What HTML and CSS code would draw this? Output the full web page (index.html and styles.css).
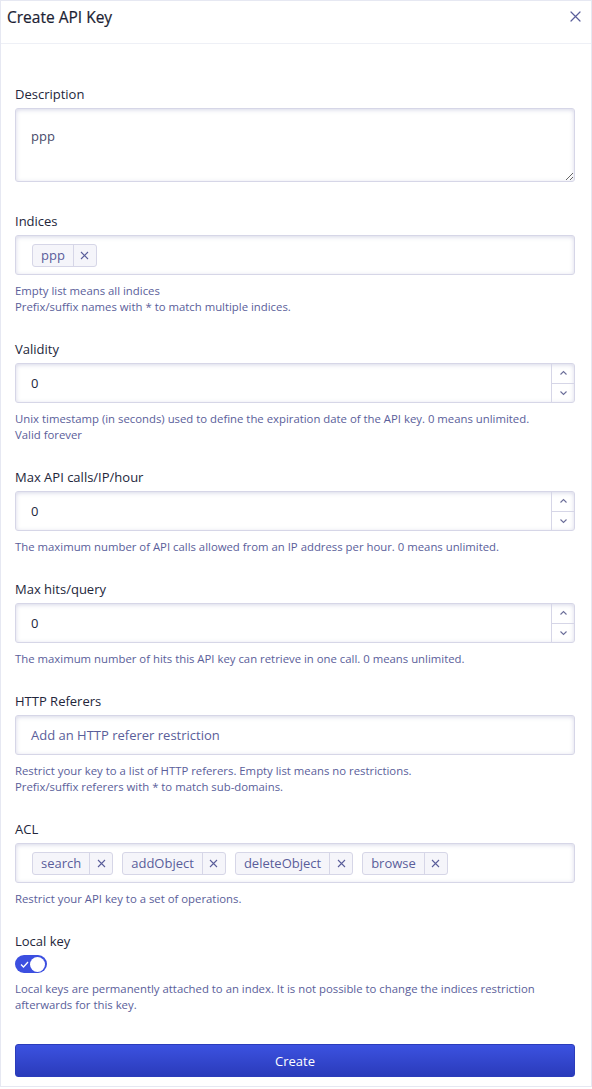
FILE: index.html
```html
<!DOCTYPE html>
<html lang="en">
<head>
<meta charset="utf-8">
<title>Create API Key</title>
<link rel="stylesheet" href="styles.css">
</head>
<body>
<div class="modal">
  <header class="modal-header">
    <h1 class="modal-title">Create API Key</h1>
    <button class="close" aria-label="Close">
      <svg width="11" height="11" viewBox="0 0 11 11"><path d="M1 1L10 10M10 1L1 10" stroke="#5a5e9a" stroke-width="1.2" fill="none" stroke-linecap="round"/></svg>
    </button>
  </header>
  <div class="modal-body">
    <div class="field field-textarea">
      <label class="label">Description</label>
      <textarea class="textarea">ppp</textarea>
    </div>

    <div class="field">
      <label class="label">Indices</label>
      <div class="input tags-input">
        <span class="tag"><span class="tag-text">ppp</span><span class="tag-del"><svg width="9" height="9" viewBox="0 0 9 9"><path d="M1 1L8 8M8 1L1 8" stroke="#5a5e9a" stroke-width="1.1" fill="none"/></svg></span></span>
      </div>
      <p class="help">Empty list means all indices<br>Prefix/suffix names with * to match multiple indices.</p>
    </div>

    <div class="field">
      <label class="label">Validity</label>
      <div class="input number-input">
        <span class="value">0</span>
        <div class="spinner">
          <span class="spin"><svg width="9" height="6" viewBox="0 0 9 6"><path d="M1.5 4.5L4.5 1.5L7.5 4.5" stroke="#6b6e99" stroke-width="1.1" fill="none"/></svg></span>
          <span class="spin"><svg width="9" height="6" viewBox="0 0 9 6"><path d="M1.5 1.5L4.5 4.5L7.5 1.5" stroke="#6b6e99" stroke-width="1.1" fill="none"/></svg></span>
        </div>
      </div>
      <p class="help">Unix timestamp (in seconds) used to define the expiration date of the API key. 0 means unlimited.<br>Valid forever</p>
    </div>

    <div class="field">
      <label class="label">Max API calls/IP/hour</label>
      <div class="input number-input">
        <span class="value">0</span>
        <div class="spinner">
          <span class="spin"><svg width="9" height="6" viewBox="0 0 9 6"><path d="M1.5 4.5L4.5 1.5L7.5 4.5" stroke="#6b6e99" stroke-width="1.1" fill="none"/></svg></span>
          <span class="spin"><svg width="9" height="6" viewBox="0 0 9 6"><path d="M1.5 1.5L4.5 4.5L7.5 1.5" stroke="#6b6e99" stroke-width="1.1" fill="none"/></svg></span>
        </div>
      </div>
      <p class="help">The maximum number of API calls allowed from an IP address per hour. 0 means unlimited.</p>
    </div>

    <div class="field">
      <label class="label">Max hits/query</label>
      <div class="input number-input">
        <span class="value">0</span>
        <div class="spinner">
          <span class="spin"><svg width="9" height="6" viewBox="0 0 9 6"><path d="M1.5 4.5L4.5 1.5L7.5 4.5" stroke="#6b6e99" stroke-width="1.1" fill="none"/></svg></span>
          <span class="spin"><svg width="9" height="6" viewBox="0 0 9 6"><path d="M1.5 1.5L4.5 4.5L7.5 1.5" stroke="#6b6e99" stroke-width="1.1" fill="none"/></svg></span>
        </div>
      </div>
      <p class="help">The maximum number of hits this API key can retrieve in one call. 0 means unlimited.</p>
    </div>

    <div class="field">
      <label class="label">HTTP Referers</label>
      <div class="input text-input">
        <span class="placeholder">Add an HTTP referer restriction</span>
      </div>
      <p class="help">Restrict your key to a list of HTTP referers. Empty list means no restrictions.<br>Prefix/suffix referers with * to match sub-domains.</p>
    </div>

    <div class="field">
      <label class="label">ACL</label>
      <div class="input tags-input">
        <span class="tag"><span class="tag-text">search</span><span class="tag-del"><svg width="9" height="9" viewBox="0 0 9 9"><path d="M1 1L8 8M8 1L1 8" stroke="#5a5e9a" stroke-width="1.1" fill="none"/></svg></span></span>
        <span class="tag"><span class="tag-text">addObject</span><span class="tag-del"><svg width="9" height="9" viewBox="0 0 9 9"><path d="M1 1L8 8M8 1L1 8" stroke="#5a5e9a" stroke-width="1.1" fill="none"/></svg></span></span>
        <span class="tag"><span class="tag-text">deleteObject</span><span class="tag-del"><svg width="9" height="9" viewBox="0 0 9 9"><path d="M1 1L8 8M8 1L1 8" stroke="#5a5e9a" stroke-width="1.1" fill="none"/></svg></span></span>
        <span class="tag"><span class="tag-text">browse</span><span class="tag-del"><svg width="9" height="9" viewBox="0 0 9 9"><path d="M1 1L8 8M8 1L1 8" stroke="#5a5e9a" stroke-width="1.1" fill="none"/></svg></span></span>
      </div>
      <p class="help">Restrict your API key to a set of operations.</p>
    </div>

    <div class="field">
      <label class="label">Local key</label>
      <div class="toggle">
        <svg class="check" width="9" height="7" viewBox="0 0 9 7"><path d="M1 3.5L3.5 6L8 1" stroke="#fff" stroke-width="1.3" fill="none"/></svg>
        <span class="knob"></span>
      </div>
      <p class="help help-toggle">Local keys are permanently attached to an index. It is not possible to change the indices restriction afterwards for this key.</p>
    </div>

    <button class="btn-primary">Create</button>
  </div>
</div>
</body>
</html>
```
FILE: styles.css
```css
* { box-sizing: border-box; }
html, body { margin: 0; padding: 0; background: #fff; }
body {
  font-family: "Open Sans", "Noto Sans", sans-serif;
  color: #23263b;
}
.modal {
  width: 592px;
  border: 1px solid #e6e8f2;
  background: #fff;
}
.modal-header {
  height: 43px;
  border-bottom: 1px solid #eef0f6;
  display: flex;
  align-items: flex-start;
  justify-content: space-between;
  padding: 5px 10px 0 6px;
}
.modal-title {
  margin: 0;
  font-size: 15.5px;
  line-height: 22px;
  font-weight: 500;
  color: #1b1e33;
  -webkit-text-stroke: 0.2px #1b1e33;
}
.close {
  border: 0;
  background: none;
  padding: 0;
  margin-top: 5px;
  width: 11px;
  height: 11px;
  display: flex;
}
.modal-body {
  padding: 40px 16px 9px 14px;
}
.field { margin-bottom: 24px; }
.field-textarea { margin-bottom: 29px; }
.label {
  display: block;
  font-size: 13px;
  line-height: 20px;
  margin-bottom: 4px;
  color: #23263b;
}
.textarea {
  display: block;
  width: 100%;
  height: 74px;
  border: 1px solid #d6d6e7;
  border-radius: 3px;
  box-shadow: inset 0 1px 4px 0 rgba(119, 122, 175, 0.3);
  padding: 17px 15px 10px;
  font-family: inherit;
  font-size: 13px;
  line-height: 20px;
  color: #484c6b;
  resize: vertical;
  outline: none;
}
.input {
  height: 40px;
  border: 1px solid #d6d6e7;
  border-radius: 3px;
  box-shadow: inset 0 1px 4px 0 rgba(119, 122, 175, 0.3);
  display: flex;
  align-items: center;
  font-size: 13px;
  background: #fff;
}
.text-input { padding: 0 15px; }
.placeholder { color: #5a5e9a; }
.tags-input { padding: 0 15px 0 16px; gap: 9px; }
.tag {
  display: inline-flex;
  height: 23px;
  border: 1px solid #d6d6e7;
  border-radius: 3px;
  background: #f5f5fa;
  color: #5a5e9a;
  font-size: 13px;
  align-items: stretch;
}
.tag-text {
  display: flex;
  align-items: center;
  padding: 0 8px;
}
.tag-del {
  display: flex;
  align-items: center;
  justify-content: center;
  width: 23px;
  border-left: 1px solid #d6d6e7;
}
.number-input {
  padding-left: 15px;
  justify-content: space-between;
  align-items: stretch;
}
.value {
  display: flex;
  align-items: center;
  color: #23263b;
}
.spinner {
  width: 23px;
  border-left: 1px solid #d6d6e7;
  display: flex;
  flex-direction: column;
}
.spin {
  flex: 1;
  display: flex;
  align-items: center;
  justify-content: center;
}
.spin + .spin { border-top: 1px solid #d6d6e7; }
.help {
  margin: 8px 0 0;
  font-size: 11.35px;
  line-height: 16px;
  color: #5a5e9a;
}
.toggle {
  width: 32px;
  height: 18px;
  border-radius: 9px;
  background: #3c4fe0;
  display: flex;
  align-items: center;
  padding: 0 2px 0 5px;
  justify-content: space-between;
}
.check { display: block; }
.knob {
  width: 15px;
  height: 15px;
  border-radius: 50%;
  background: #fff;
}
.help-toggle { margin-top: 8px; }
.field:last-of-type { margin-bottom: 31px; }
.btn-primary {
  display: block;
  width: 100%;
  height: 33px;
  border: 1px solid #2b3cbb;
  border-radius: 3px;
  background: linear-gradient(180deg, #3c52e0 0%, #2a3bbb 100%);
  color: #fff;
  font-family: inherit;
  font-size: 13px;
  line-height: 20px;
  cursor: pointer;
}
```
